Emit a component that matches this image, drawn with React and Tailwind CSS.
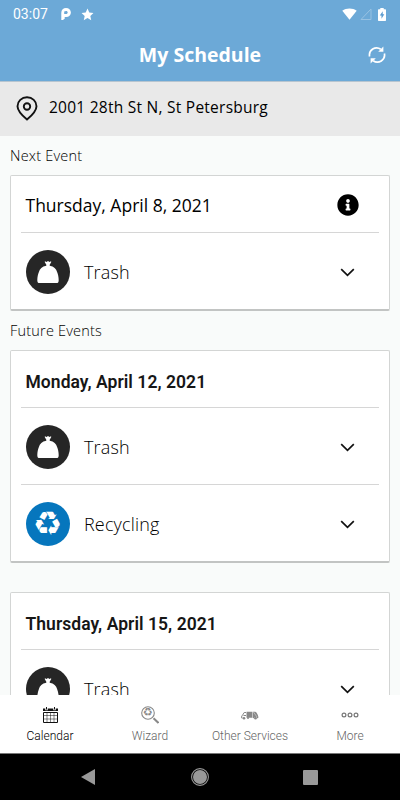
import React from "react";
import { FaInfoCircle } from "react-icons/fa";

const openSans = "font-['Open_Sans','Noto_Sans',sans-serif]";
const roboto = "font-['Roboto',sans-serif]";

function StatusBar() {
  return (
    <div className="flex h-7 items-center pr-[14px] pl-[13px] text-white">
      <span className={`${roboto} w-[48px] text-[14px] leading-4 whitespace-nowrap`}>03:07</span>
      <svg className="h-[12px] w-[10px]" viewBox="0 0 10 12">
        <path
          fillRule="evenodd"
          fill="#fff"
          d="M.3 4.800C.3 1.600 2.400 0 5 0c2.800 0 4.900 1.800 4.900 4.500S7.900 9 5.200 9H3.700v1.700L1.900 12H.3zM3.200 3.500v2.600h1.900c1 0 1.600-.6 1.600-1.500S6.100 3 5.100 3z"
        />
      </svg>
      <svg className="ml-[10px] h-[13px] w-[13px]" viewBox="0 0 24 24" fill="#fff">
        <path d="M12 1l3.300 7.500 7.700.8-5.800 5.300 1.700 7.900L12 18.400l-6.900 4.100 1.700-7.900L1 9.300l7.700-.8z" />
      </svg>
      <svg className="ml-auto h-3 w-[15px]" viewBox="0 0 16 12">
        <path fill="#fff" d="M.3 2.500C4.500-.7 11.500-.7 15.700 2.500L8 12z" />
      </svg>
      <svg className="ml-[3px] h-3 w-3" viewBox="0 0 12 12">
        <path d="M11 1v10.500H1z" fill="none" stroke="#98c2e2" strokeWidth="1" />
      </svg>
      <svg className="ml-[6px] h-[13px] w-2" viewBox="0 0 8 13">
        <path fill="#fff" d="M2.300 0h3.400v1.200H7.300q.7 0 .7.700v10.400q0 .7-.7.700H.7q-.7 0-.7-.7V1.900q0-.7.7-.7h1.600z" />
        <path fill="#5a9bd0" d="M4.700 3.200L1.800 7.600h1.700v3.200l2.800-4.500H4.700z" />
      </svg>
    </div>
  );
}

function RefreshIcon() {
  return (
    <svg className="h-[18px] w-[18px]" viewBox="0 0 18 18" fill="none" stroke="#fff" strokeWidth="1.700">
      <path d="M1.600 10.500A7.200 7.200 0 0 1 12.800 3.200" />
      <path d="M16.400 7.500A7.200 7.200 0 0 1 5.200 14.800" />
      <path d="M15.400.6v5.200h-5.200z" fill="#fff" stroke="none" />
      <path d="M2.600 17.400v-5.200h5.200z" fill="#fff" stroke="none" />
    </svg>
  );
}

function PinIcon() {
  return (
    <svg className="h-[25px] w-[22px]" viewBox="0 0 22 25" fill="none" stroke="#111" strokeWidth="1.900">
      <path d="M11 23.500C8 21 1.500 15.500 1.500 10.200 1.500 5.200 5.700 1.300 11 1.300s9.500 3.900 9.500 8.900c0 5.300-6.500 10.800-9.500 13.300z" />
      <circle cx="11" cy="10.500" r="3.200" />
    </svg>
  );
}

function TrashBadge() {
  return (
    <svg className="h-11 w-11 shrink-0" viewBox="0 0 44 44">
      <circle cx="22" cy="22" r="22" fill="#262626" />
      <path
        fill="#fff"
        d="M19 11.300l1.500.7 1.500-.9 1.500.9 1.500-.7.300.8-1.600 2.600v1.100c4.200.7 6.600 3 7.300 6 .9 2.400 1.700 5 1.700 8.400 0 2-.7 2.800-2.300 2.800H13.600c-1.600 0-2.300-.8-2.300-2.800 0-3.400.8-6 1.700-8.400.7-3 3.100-5.300 7.300-6v-1.100l-1.600-2.600z"
      />
    </svg>
  );
}

function RecycleBadge() {
  return (
    <div className="flex h-11 w-11 shrink-0 items-center justify-center rounded-full bg-[#0676bd]">
      <span className="font-['DejaVu_Sans',sans-serif] text-[33px] leading-[44px] text-white">♻</span>
    </div>
  );
}

function Chevron() {
  return (
    <svg className="h-[9px] w-[15px]" viewBox="0 0 15 9" fill="none" stroke="#111" strokeWidth="1.700">
      <path d="M1.200 1.200l6.300 6.200 6.300-6.200" />
    </svg>
  );
}

function EventRow({ kind }) {
  return (
    <div className="mx-[10px] flex h-[77px] items-center border-t border-[#d6d6d6] pt-[2.500px] pr-[24px] pl-[4.500px]">
      {kind === "Trash" ? <TrashBadge /> : <RecycleBadge />}
      <span className={`${openSans} ml-[14.500px] text-[18px] leading-6 font-light tracking-[0.15px] text-black`}>{kind}</span>
      <div className="ml-auto">
        <Chevron />
      </div>
    </div>
  );
}

function EventCard({ date, kinds, next }) {
  return (
    <section className="mx-[10px] shrink-0 rounded-[2px] border border-b-2 border-[#d3d5d4] border-b-[#c2c4c3] bg-white">
      <div className="flex h-14 items-center pt-[2px] pr-[30.500px] pl-[14.500px]">
        {next ? (
          <>
            <h2 className={`${openSans} text-[17.500px] whitespace-nowrap text-black`}>{date}</h2>
            <FaInfoCircle className="ml-auto h-[22px] w-[22px] text-black" />
          </>
        ) : (
          <h2 className={`${roboto} pt-[4px] text-[17.500px] font-semibold tracking-[0.05px] whitespace-nowrap text-[#161616]`}>{date}</h2>
        )}
      </div>
      {kinds.map((k) => (
        <EventRow key={k} kind={k} />
      ))}
    </section>
  );
}

function SectionLabel({ children }) {
  return (
    <div className={`${openSans} flex h-[39px] shrink-0 items-center pl-[10px] text-[14.500px] font-light tracking-[0.2px] text-black`}>
      {children}
    </div>
  );
}

function CalendarIcon() {
  return (
    <svg className="h-4 w-[15px]" viewBox="0 0 15 16" fill="none" stroke="#111">
      <path d="M4 5v10.500M7.500 5v10.500M11 5v10.500M.5 8.500h14M.5 12h14" strokeWidth=".5" />
      <path d="M.5 5.500h14v10H.5z" strokeWidth="1" />
      <path d="M0 1.500h2.300v1.800h2.400V1.500h5.600v1.800h2.400V1.500H15V4H0zM3 0h1v2.500H3zM11 0h1v2.500h-1z" fill="#111" stroke="none" />
    </svg>
  );
}

function WizardIcon() {
  return (
    <div className="relative h-[18px] w-[18px] text-[#888]">
      <svg className="h-[18px] w-[18px]" viewBox="0 0 18 18" fill="none" stroke="currentColor">
        <circle cx="7" cy="7" r="6.300" strokeWidth="1.100" />
        <path d="M12.500 12.200l5 4.800" strokeWidth="2" />
      </svg>
      <span className="absolute top-0 left-0 w-[14px] text-center font-['DejaVu_Sans',sans-serif] text-[11px] leading-[14px]">♻</span>
    </div>
  );
}

function TruckIcon() {
  return (
    <svg className="h-[9px] w-[18px]" viewBox="0 0 18 9">
      <path fill="#888" d="M5.500.7h5.700v6H5.500zM11.700.7h2.600c1.700.8 2.700 3 3.200 5.700l-1.200 1c-.2-1.500-2.800-1.700-3.300-.2l-1.300-.2z" />
      <path fill="none" stroke="#888" strokeWidth="1" d="M5 1.500H3.200L1.500 4.200.7 5v2h.7M2.500 4.500H5" />
      <path stroke="#ddd" strokeWidth=".6" d="M12.500 1l3.500 5" />
      <circle cx="3" cy="7.200" r="1.300" fill="#888" />
      <circle cx="14.500" cy="7.200" r="1.300" fill="#888" />
      <circle cx="7" cy="7" r="1" fill="#888" />
    </svg>
  );
}

function MoreIcon() {
  return (
    <svg className="h-[6px] w-[18px]" viewBox="0 0 18 6" fill="none" stroke="#777" strokeWidth="1.200">
      <circle cx="3" cy="3" r="1.900" />
      <circle cx="9" cy="3" r="1.900" />
      <circle cx="15" cy="3" r="1.900" />
    </svg>
  );
}

const tabs = [
  { label: "Calendar", Icon: CalendarIcon, active: true },
  { label: "Wizard", Icon: WizardIcon },
  { label: "Other Services", Icon: TruckIcon },
  { label: "More", Icon: MoreIcon },
];

function TabBar() {
  return (
    <nav className="grid h-[58px] shrink-0 grid-cols-4 bg-white pt-[10px]">
      {tabs.map(({ label, Icon, active }) => (
        <div key={label} className="flex flex-col items-center">
          <div className="flex h-5 items-center">
            <Icon />
          </div>
          <span
            className={`${roboto} mt-[4px] text-[12px] leading-[14px] font-light whitespace-nowrap ${active ? "text-black" : "text-[#666]"}`}
          >
            {label}
          </span>
        </div>
      ))}
    </nav>
  );
}

function SystemNav() {
  return (
    <div className="flex h-[47px] shrink-0 items-center justify-between border-t border-[#777] bg-black pr-[82px] pl-[81px]">
      <svg className="h-4 w-[14px]" viewBox="0 0 14 16">
        <path d="M14 0v16L0 8z" fill="#999" />
      </svg>
      <svg className="ml-[2px] h-[18px] w-[18px]" viewBox="0 0 18 18">
        <circle cx="9" cy="9" r="8.400" fill="none" stroke="#999" strokeWidth="1.100" />
        <circle cx="9" cy="9" r="7" fill="#999" />
      </svg>
      <div className="h-[15px] w-[15px] rounded-[1px] bg-[#999]" />
    </div>
  );
}

export default function App() {
  return (
    <div className="flex h-[800px] w-[400px] flex-col overflow-hidden bg-[#f9fbfa]">
      <header className="h-[82px] shrink-0 border-b border-[#b7c5d0] bg-[#6ca9d7]">
        <StatusBar />
        <div className="flex h-[53px] items-center pr-[14px] pl-8">
          <h1 className={`${openSans} flex-1 text-center text-[19.500px] font-bold whitespace-nowrap text-white`}>My Schedule</h1>
          <RefreshIcon />
        </div>
      </header>
      <div className="flex h-[54px] shrink-0 items-center bg-[#e9e9e9] pb-[2px] pl-[16px]">
        <PinIcon />
        <span className={`${openSans} ml-[11px] text-[15.500px] tracking-[0.25px] whitespace-nowrap text-black`}>2001 28th St N, St Petersburg</span>
      </div>
      <main className="flex min-h-0 flex-1 flex-col overflow-hidden">
        <SectionLabel>Next Event</SectionLabel>
        <EventCard next date="Thursday, April 8, 2021" kinds={["Trash"]} />
        <SectionLabel>Future Events</SectionLabel>
        <EventCard date="Monday, April 12, 2021" kinds={["Trash", "Recycling"]} />
        <div className="h-[29px] shrink-0" />
        <EventCard date="Thursday, April 15, 2021" kinds={["Trash"]} />
      </main>
      <TabBar />
      <SystemNav />
    </div>
  );
}
